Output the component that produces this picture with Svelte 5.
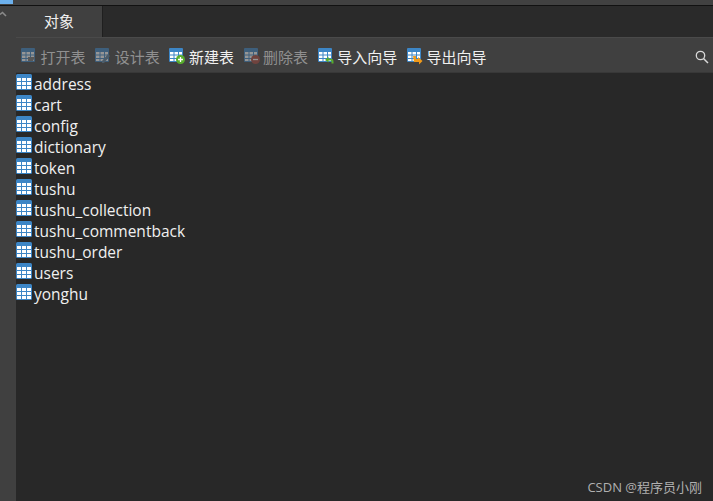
<script>
	const tables = ['address', 'cart', 'config', 'dictionary', 'token', 'tushu', 'tushu_collection', 'tushu_commentback', 'tushu_order', 'users', 'yonghu'];

	const tools = [
		{ label: '打开表', badge: 'open', off: true },
		{ label: '设计表', badge: 'design', off: true },
		{ label: '新建表', badge: 'add' },
		{ label: '删除表', badge: 'del', off: true },
		{ label: '导入向导', badge: 'import' },
		{ label: '导出向导', badge: 'export' }
	];
</script>

{#snippet grid()}
	<rect x="0" y="0" width="14" height="14" rx="1" fill="#3d86c6" />
	<path d="M1 4h3.500v2.500H1zM5.500 4H9v2.500H5.500zM10 4h3v2.500h-3zM1 7.500h3.500V10H1zM5.500 7.500H9V10H5.500zM10 7.500h3V10h-3zM1 11h3.500v2H1zM5.500 11H9v2H5.500zM10 11h3v2h-3z" fill="#fff" />
{/snippet}

<div class="window">
	<div class="topbar"><span class="blue"></span></div>
	<div class="main">
		<div class="gutter">
			<svg width="8" height="7" viewBox="0 0 8 7"><path d="M0 3.500L2.500 1.500L6 5" fill="none" stroke="#8a8a8a" stroke-width="1.600" /></svg>
		</div>
		<div class="content">
			<div class="tabs">
				<div class="tab">对象</div>
			</div>
			<div class="toolbar">
				{#each tools as t}
					<div class="tool" class:off={t.off}>
						<svg class="ticon" width="16" height="17" viewBox="0 0 16 17">
							{@render grid()}
							{#if t.badge === 'add'}
								<circle cx="11.500" cy="11.500" r="4.500" fill="#58ad2d" />
								<path d="M9 11.500h5M11.500 9v5" stroke="#fff" stroke-width="1.300" />
							{:else if t.badge === 'del'}
								<circle cx="11.500" cy="11.500" r="4.500" fill="#a8473c" />
								<path d="M9 11.500h5" stroke="#fff" stroke-width="1.300" />
							{:else if t.badge === 'open'}
								<path d="M7 9h7l-2 4H7z" fill="#777" />
							{:else if t.badge === 'design'}
								<path d="M7 13l6-7 2 2-6 7H7z" fill="#5b7f9c" />
							{:else if t.badge === 'import'}
								<path d="M7 12l3.500-3.500v2.200h2.500q2.500 0 2.500 3v1.800h-2v-2q0-1-1-1h-2v2z" fill="#58ad2d" />
							{:else if t.badge === 'export'}
								<path d="M6 8h3v3h2V9l4.500 4-3.500 3.500v-2.500H7z" fill="#f09a1a" />
							{/if}
						</svg>
						<span>{t.label}</span>
					</div>
				{/each}
				<svg class="search" width="14" height="14" viewBox="0 0 14 14">
					<circle cx="5.500" cy="5.500" r="4.200" fill="none" stroke="#d8d8d8" stroke-width="1.300" />
					<path d="M8.500 8.500l4.500 4.500" stroke="#d8d8d8" stroke-width="1.500" />
				</svg>
			</div>
			<div class="list">
				{#each tables as name}
					<div class="row">
						<svg width="16" height="16" viewBox="0 0 16 16">
							<rect x="0" y="0" width="16" height="16" rx="1.500" fill="#3d86c6" />
							<path d="M1 4h4v3H1zM6 4h4v3H6zM11 4h4v3h-4zM1 8h4v3H1zM6 8h4v3H6zM11 8h4v3h-4zM1 12h4v3H1zM6 12h4v3H6zM11 12h4v3h-4z" fill="#fff" />
						</svg>
						<span>{name}</span>
					</div>
				{/each}
			</div>
		</div>
	</div>
	<div class="mark">CSDN @程序员小刚</div>
</div>

<style>
	:global(body) {
		background: #282828;
	}

	.window {
		position: relative;
		width: 713px;
		height: 501px;
		display: flex;
		flex-direction: column;
		overflow: hidden;
		font-family: "Open Sans", "Noto Sans CJK SC", sans-serif;
		font-size: 15px;
		color: #f0f0f0;
	}

	.topbar {
		height: 5px;
		background: #414141;
		border-bottom: 1px solid #111;
	}

	.blue {
		display: block;
		width: 13px;
		height: 4px;
		background: #6cb0ec;
	}

	.main {
		flex: 1;
		display: flex;
		min-height: 0;
	}

	.gutter {
		width: 16px;
		background: #404040;
		padding-top: 5px;
		box-sizing: border-box;
	}

	.gutter svg {
		display: block;
	}

	.content {
		flex: 1;
		display: flex;
		flex-direction: column;
		min-width: 0;
	}

	.tabs {
		height: 31px;
		display: flex;
		background: #2a2a2a;
	}

	.tab {
		width: 87px;
		background: #404040;
		border-right: 1px solid #1f1f1f;
		box-sizing: border-box;
		display: flex;
		align-items: center;
		justify-content: center;
		padding-bottom: 2px;
	}

	.toolbar {
		height: 35px;
		background: #404040;
		border-top: 1px solid #4a4a4a;
		box-sizing: border-box;
		display: flex;
		align-items: center;
		gap: 9.7px;
		padding: 3px 0 0 5px;
	}

	.tool {
		display: flex;
		align-items: center;
		gap: 3.500px;
		height: 20px;
	}

	.tool.off {
		color: #909090;
	}

	.tool.off .ticon {
		opacity: 0.45;
	}

	.search {
		margin-left: auto;
		margin-right: 4px;
	}

	.list {
		flex: 1;
		background: #282828;
		border-top: 1px solid #383838;
		padding-top: 1px;
		font-size: 15.5px;
	}

	.row {
		height: 21px;
		display: flex;
		align-items: center;
		gap: 2px;
		line-height: 21px;
	}

	.row svg {
		margin-top: -5px;
	}

	.mark {
		position: absolute;
		right: 11px;
		bottom: 5px;
		font-size: 13px;
		color: #b0b0b0;
	}
</style>
